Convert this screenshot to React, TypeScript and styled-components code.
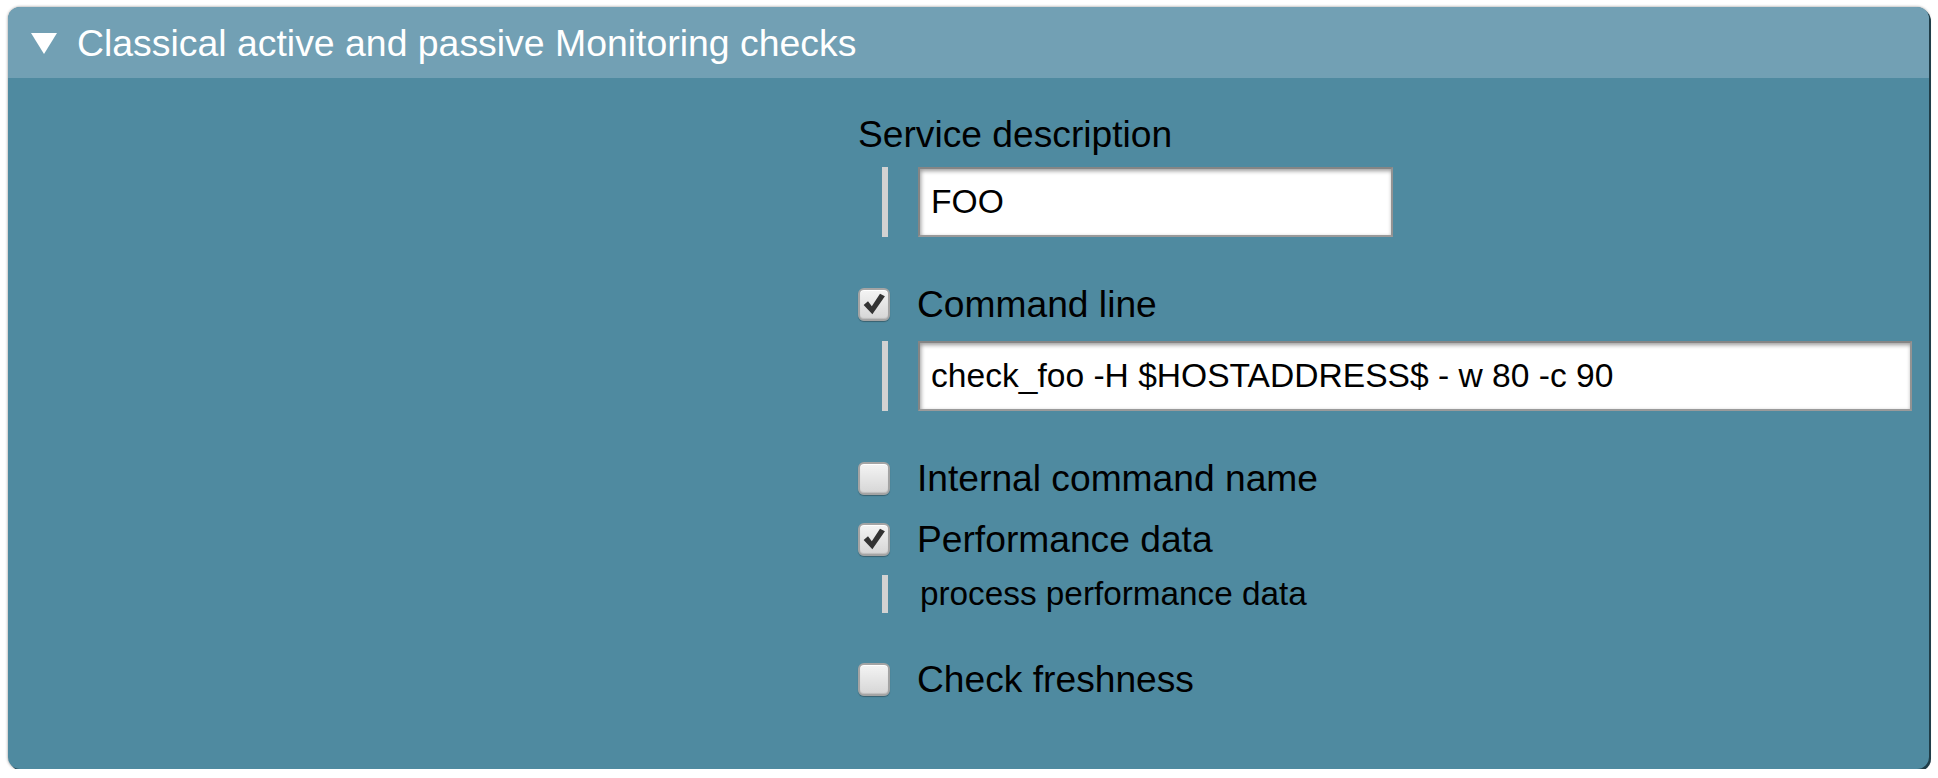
import React from "react";
import styled, { createGlobalStyle } from "styled-components";

const Global = createGlobalStyle`
  html, body { margin: 0; padding: 0; background: #ffffff; }
  body { font-family: "Liberation Sans", Arial, sans-serif; }
`;

const Panel = styled.section`
  margin: 7px 9px 0 8px;
  border-radius: 12px;
  overflow: hidden;
  background: #4f8aa0;
  box-shadow: 2px 2px 0 #1f3d48, 0 0 3px rgba(0, 0, 0, 0.45);
`;

const Header = styled.div`
  height: 71px;
  display: flex;
  align-items: center;
  gap: 20px;
  padding-left: 23px;
  background: #72a0b4;
  color: #ffffff;
  font-size: 37.4px;
  line-height: 42px;
`;

const Body = styled.div`
  display: grid;
  grid-template-columns: 850px 1fr;
  padding: 35px 17px 69px 0;
`;

const Form = styled.div`
  display: flex;
  flex-direction: column;
  color: #000;
`;

const Label = styled.div<{ $mt?: number }>`
  font-size: 37.2px;
  line-height: 42px;
  margin-top: ${(p) => p.$mt ?? 0}px;
`;

const CheckRow = styled.label<{ $mt?: number }>`
  display: flex;
  align-items: center;
  gap: 27px;
  font-size: 37.2px;
  line-height: 42px;
  margin-top: ${(p) => p.$mt ?? 0}px;
`;

const Box = styled.span`
  box-sizing: border-box;
  width: 32px;
  height: 33px;
  border-radius: 6px;
  border: 2px solid #a4a4a4;
  background: linear-gradient(#f4f4f4, #d6d6d6);
  box-shadow: inset 0 1px 0 #ffffff, inset 0 -1px 1px rgba(0, 0, 0, 0.12), 0 1px 1px rgba(0, 0, 0, 0.3);
  display: flex;
  align-items: center;
  justify-content: center;
  flex: none;
`;

const Nested = styled.div<{ $mt?: number; $h: number }>`
  display: flex;
  align-items: stretch;
  height: ${(p) => p.$h}px;
  margin-top: ${(p) => p.$mt ?? 0}px;
  padding-left: 24px;
  gap: 30px;
`;

const Bar = styled.span`
  width: 6px;
  flex: none;
  background: #d2d2d2;
`;

const Input = styled.div<{ $w?: number }>`
  box-sizing: border-box;
  ${(p) => (p.$w ? `width: ${p.$w}px;` : "flex: 1;")}
  background: #ffffff;
  border: 2px solid #858585;
  border-bottom-color: #9a9a9a;
  border-right-color: #939393;
  box-shadow: inset 1px 2px 4px rgba(0, 0, 0, 0.4);
  display: flex;
  align-items: center;
  padding-left: 11px;
  font-size: 33.6px;
`;

const SubText = styled.div`
  display: flex;
  align-items: center;
  font-size: 33.3px;
  margin-left: 2px;
`;

const Triangle = () => (
  <svg width="26" height="22" viewBox="0 0 26 22">
    <polygon points="0,1 26,1 13,22" fill="#ffffff" />
  </svg>
);

const Check = () => (
  <svg width="24" height="24" viewBox="0 0 22 22">
    <path d="M1.5 12 L5.5 8.5 L9 13 L16.5 1.5 L21 4 L9.5 20.5 Z" fill="#333333" />
  </svg>
);

const Checkbox = ({ checked }: { checked?: boolean }) => (
  <Box>{checked ? <Check /> : null}</Box>
);

export default function App() {
  return (
    <>
      <Global />
      <Panel>
        <Header>
          <Triangle />
          <span>Classical active and passive Monitoring checks</span>
        </Header>
        <Body>
          <div />
          <Form>
            <Label>Service description</Label>
            <Nested $mt={12} $h={70}>
              <Bar />
              <Input $w={475}>FOO</Input>
            </Nested>
            <CheckRow $mt={46}>
              <Checkbox checked />
              Command line
            </CheckRow>
            <Nested $mt={16} $h={70}>
              <Bar />
              <Input>check_foo -H $HOSTADDRESS$ - w 80 -c 90</Input>
            </Nested>
            <CheckRow $mt={46}>
              <Checkbox />
              Internal command name
            </CheckRow>
            <CheckRow $mt={19}>
              <Checkbox checked />
              Performance data
            </CheckRow>
            <Nested $mt={15} $h={38}>
              <Bar />
              <SubText>process performance data</SubText>
            </Nested>
            <CheckRow $mt={45}>
              <Checkbox />
              Check freshness
            </CheckRow>
          </Form>
        </Body>
      </Panel>
    </>
  );
}
